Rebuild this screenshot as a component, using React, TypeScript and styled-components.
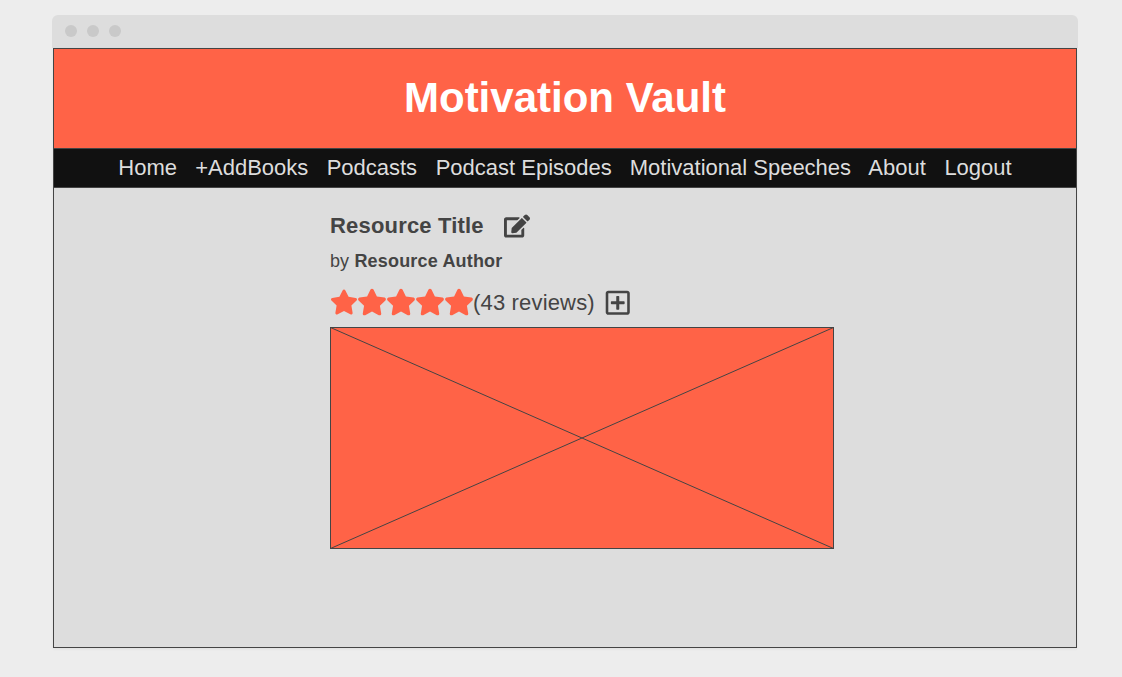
import React from "react";
import styled, { createGlobalStyle } from "styled-components";
import { FaEdit, FaStar, FaRegPlusSquare } from "react-icons/fa";

const GlobalStyle = createGlobalStyle`
  * { box-sizing: border-box; }
  body {
    margin: 0;
    background: #ededed;
    font-family: "Liberation Sans", Arial, sans-serif;
    color: #444;
  }
`;

const Page = styled.main`
  height: 677px;
  padding: 15px 44px 0 52px;
`;

const Browser = styled.div`
  width: 1026px;
  height: 633px;
  display: flex;
  flex-direction: column;
`;

const TitleBar = styled.div`
  height: 33px;
  flex: none;
  display: flex;
  gap: 10px;
  padding: 10px 13px;
  background: #ddd;
  border-radius: 6px 6px 0 0;
`;

const Dot = styled.span`
  width: 12px;
  height: 12px;
  border-radius: 50%;
  background: #c9c9c9;
`;

const Screen = styled.div`
  width: 1024px;
  height: 600px;
  margin-left: 1px;
  border: 1px solid #444;
  background: #ddd;
  box-shadow: 0 1px 3px rgba(0, 0, 0, 0.06);
`;

const Header = styled.header`
  height: 99px;
  display: flex;
  align-items: center;
  justify-content: center;
  padding-bottom: 2px;
  background: #ff6347;
`;

const SiteName = styled.h1`
  margin: 0;
  font-size: 42px;
  line-height: 48px;
  color: #fff;
`;

const Nav = styled.nav`
  height: 40px;
  display: flex;
  justify-content: center;
  background: #111;
  border-top: 1px solid #444;
  border-bottom: 1px solid #444;
`;

const NavLink = styled.a<{ $gap: number }>`
  margin-left: ${({ $gap }) => $gap}px;
  font-size: 22px;
  line-height: 38px;
  white-space: nowrap;
  color: #ddd;
`;

const Resource = styled.section`
  width: 504px;
  margin: 24px 0 0 276px;
`;

const TitleRow = styled.div`
  height: 28px;
  display: flex;
  align-items: center;
  gap: 20.3px;
`;

const Title = styled.h2`
  margin: 0;
  font-size: 22px;
  line-height: 28px;
  letter-spacing: 0.18px;
`;

const Byline = styled.p`
  margin: 9px 0 0;
  font-size: 18px;
  line-height: 24px;

  strong {
    margin-left: 0.4px;
    letter-spacing: 0.18px;
  }
`;

const RatingRow = styled.div`
  height: 34px;
  margin-top: 13px;
  display: flex;
  align-items: center;
`;

const Stars = styled.div`
  width: 143px;
  display: flex;
  align-items: center;
  padding-bottom: 1.4px;
  color: #ff6347;
`;

const Star = styled(FaStar)<{ $first: boolean }>`
  flex: none;
  width: ${({ $first }) => ($first ? 28 : 30)}px;
  height: ${({ $first }) => ($first ? 28 : 30)}px;
  margin-left: ${({ $first }) => ($first ? 0 : -1.1)}px;
  margin-bottom: ${({ $first }) => ($first ? 1.4 : 0)}px;
`;

const Reviews = styled.span`
  font-size: 22px;
  letter-spacing: 0.17px;
  margin-right: 9px;
`;

const AddIcon = styled(FaRegPlusSquare)`
  margin-bottom: 1px;
`;

const Cover = styled.svg`
  display: block;
  width: 504px;
  height: 222px;
  margin-top: 7px;
`;

const links = [
  { label: "Home", gap: 0 },
  { label: "+AddBooks", gap: 18.2 },
  { label: "Podcasts", gap: 18.3 },
  { label: "Podcast Episodes", gap: 18.5 },
  { label: "Motivational Speeches", gap: 18 },
  { label: "About", gap: 17.2 },
  { label: "Logout", gap: 18.6 },
];

export default function App() {
  return (
    <Page>
      <GlobalStyle />
      <Browser>
        <TitleBar>
          <Dot />
          <Dot />
          <Dot />
        </TitleBar>
        <Screen>
          <Header>
            <SiteName>Motivation Vault</SiteName>
          </Header>
          <Nav>
            {links.map(({ label, gap }) => (
              <NavLink key={label} $gap={gap}>
                {label}
              </NavLink>
            ))}
          </Nav>
          <Resource>
            <TitleRow>
              <Title>Resource Title</Title>
              <FaEdit size={26} />
            </TitleRow>
            <Byline>
              by <strong>Resource Author</strong>
            </Byline>
            <RatingRow>
              <Stars>
                {[1, 2, 3, 4, 5].map((n) => (
                  <Star key={n} $first={n === 1} />
                ))}
              </Stars>
              <Reviews>(43 reviews)</Reviews>
              <AddIcon size={27.5} />
            </RatingRow>
            <Cover viewBox="0 0 504 222">
              <rect x="0.5" y="0.5" width="503" height="221" fill="#ff6347" stroke="#444" />
              <path d="M0.5 0.5L503.5 221.5M503.5 0.5L0.5 221.5" stroke="#444" />
            </Cover>
          </Resource>
        </Screen>
      </Browser>
    </Page>
  );
}
